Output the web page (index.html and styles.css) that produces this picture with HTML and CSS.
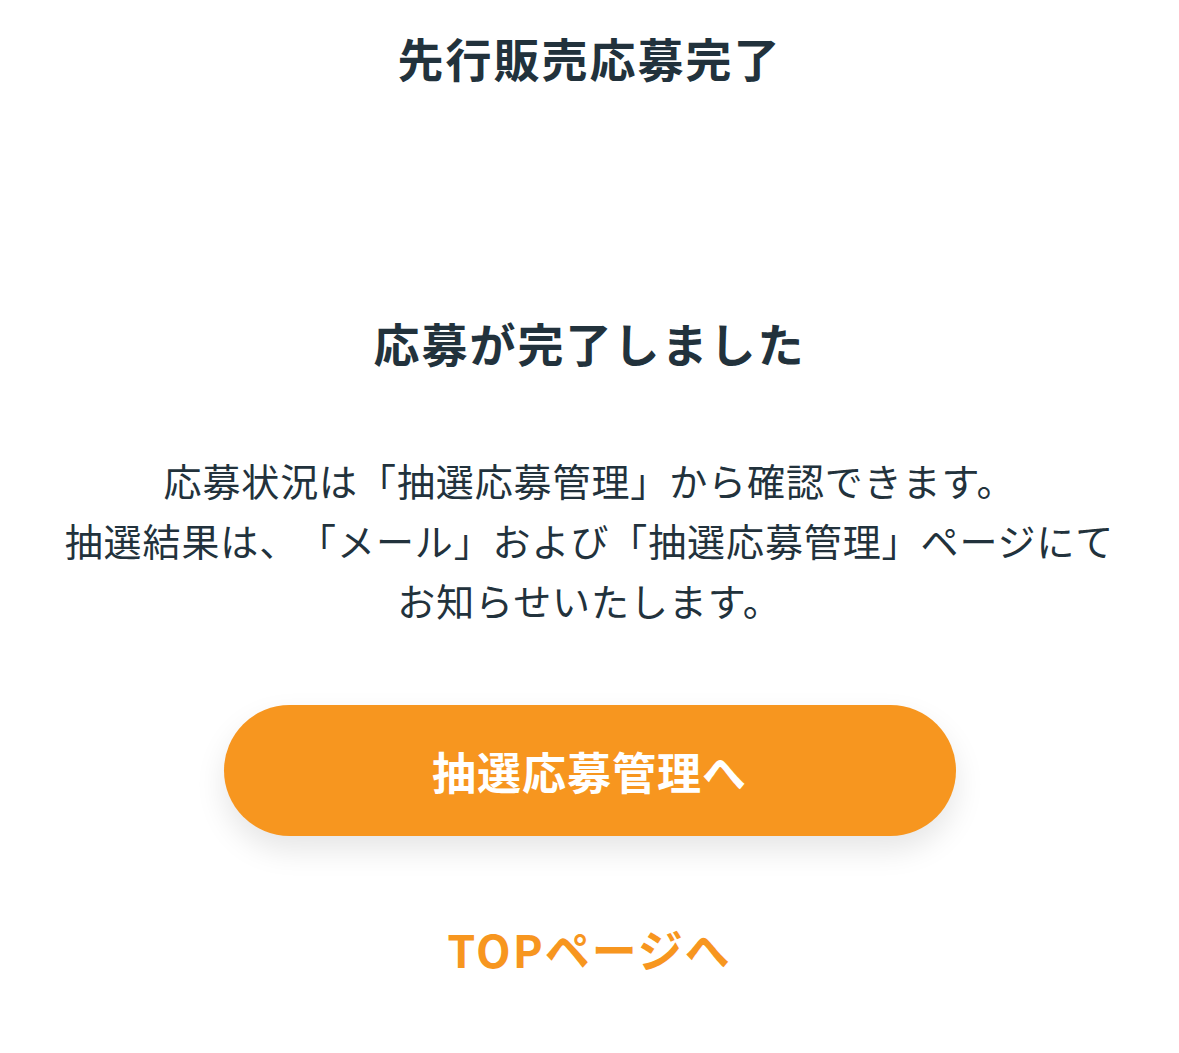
FILE: index.html
```html
<!DOCTYPE html>
<html lang="ja">
<head>
<meta charset="utf-8">
<title>先行販売応募完了</title>
<link rel="stylesheet" href="styles.css">
</head>
<body>
<header class="page-header">
  <h1 class="page-title">先行販売応募完了</h1>
</header>
<main class="complete">
  <h2 class="complete-heading">応募が完了しました</h2>
  <p class="complete-message">
    <span class="line">応募状況は「抽選応募管理」から確認できます。</span>
    <span class="line">抽選結果は、「メール」および「抽選応募管理」ページにて</span>
    <span class="line">お知らせいたします。</span>
  </p>
  <a class="primary-button" href="#">抽選応募管理へ</a>
  <a class="text-link" href="#">TOPページへ</a>
</main>
</body>
</html>
```
FILE: styles.css
```css
html, body {
  margin: 0;
  padding: 0;
  background: #ffffff;
}

body {
  font-family: "Noto Sans CJK JP", "Noto Sans", sans-serif;
  color: #22323c;
  text-spacing-trim: space-all;
}

.page-header {
  height: 114px;
  display: flex;
  align-items: center;
  justify-content: center;
}

.page-title {
  margin: 0;
  font-size: 46px;
  font-weight: 700;
  letter-spacing: 2px;
  line-height: 1;
}

.complete {
  display: flex;
  flex-direction: column;
  align-items: center;
}

.complete-heading {
  margin: 198px 0 0;
  font-size: 46px;
  font-weight: 700;
  letter-spacing: 2px;
  line-height: 60px;
}

.complete-message {
  margin: 78px 0 0;
  font-size: 38px;
  font-weight: 400;
  letter-spacing: 0.9px;
  line-height: 60px;
  text-align: center;
}

.complete-message .line {
  display: block;
  white-space: nowrap;
}

.primary-button {
  margin-top: 75px;
  width: 732px;
  height: 131px;
  border-radius: 66px;
  background: #f7961f;
  color: #ffffff;
  display: flex;
  align-items: center;
  justify-content: center;
  font-size: 44px;
  font-weight: 700;
  letter-spacing: 1px;
  text-decoration: none;
  box-shadow: 0 14px 30px rgba(0, 0, 0, 0.1);
}

.text-link {
  margin-top: 83px;
  font-size: 45px;
  font-weight: 700;
  letter-spacing: 2px;
  line-height: 60px;
  color: #f7961f;
  text-decoration: none;
}
```
